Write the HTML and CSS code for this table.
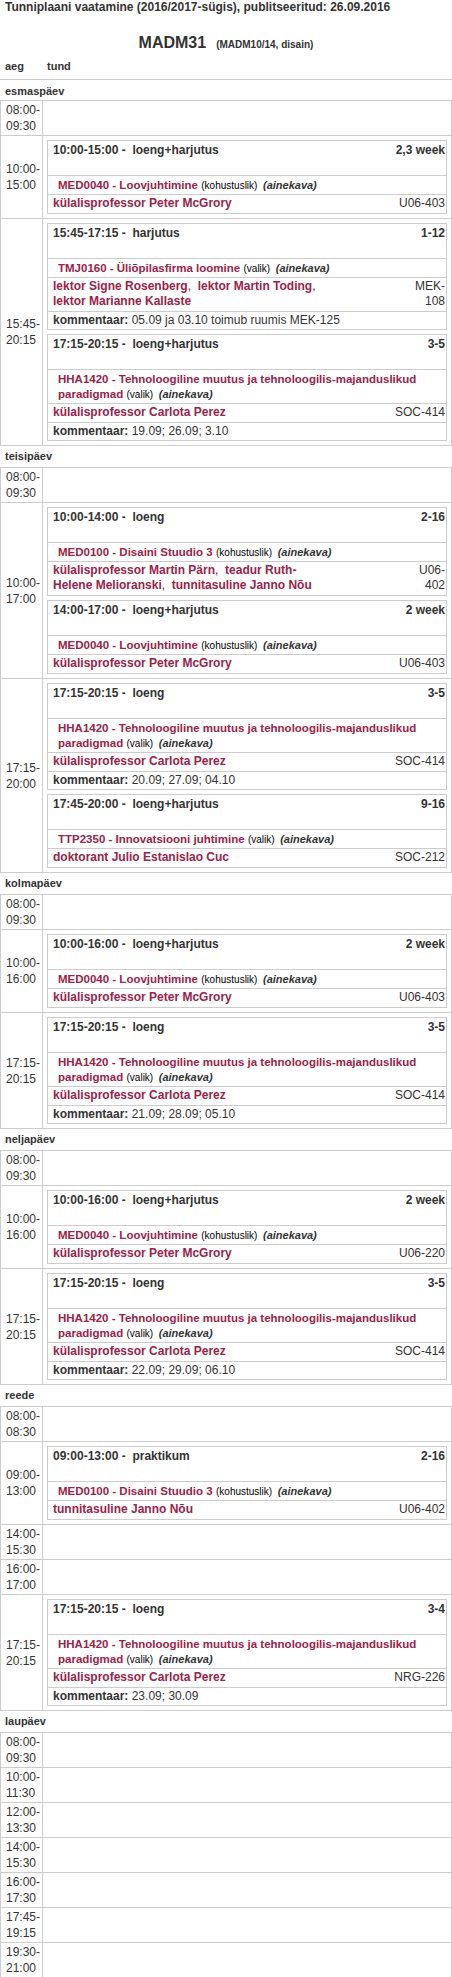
FILE: index.html
```html
<!DOCTYPE html>
<html lang="et">
<head>
<meta charset="utf-8">
<title>Tunniplaani vaatamine</title>
<link rel="stylesheet" href="styles.css">
</head>
<body>
<h1 class="page-title">Tunniplaani vaatamine (2016/2017-sügis), publitseeritud: 26.09.2016</h1>
<h2 class="group-title">MADM31<small>(MADM10/14, disain)</small></h2>
<div class="colhead"><span class="colhead-time">aeg</span><span>tund</span></div>

<h3 class="day-name day-name--first">esmaspäev</h3>
<div class="day">
  <div class="slot"><div class="slot-time">08:00-<wbr>09:30</div><div class="slot-lessons"></div></div>
  <div class="slot"><div class="slot-time">10:00-<wbr>15:00</div>
    <div class="slot-lessons">
      <div class="lesson">
        <div class="lesson-head"><span>10:00-15:00 -&nbsp; loeng+harjutus</span><span>2,3 week</span></div>
        <div class="lesson-course"><span class="course-name">MED0040 - Loovjuhtimine</span> <span class="course-kind">(kohustuslik)&nbsp; </span><em class="course-plan">(ainekava)</em></div>
        <div class="lesson-staff"><div class="staff-names"><span class="person">külalisprofessor Peter McGrory</span></div><div class="staff-room">U06-403</div></div>
      </div>
    </div>
  </div>
  <div class="slot"><div class="slot-time">15:45-<wbr>20:15</div>
    <div class="slot-lessons">
      <div class="lesson">
        <div class="lesson-head"><span>15:45-17:15 -&nbsp; harjutus</span><span>1-12</span></div>
        <div class="lesson-course"><span class="course-name">TMJ0160 - Üliõpilasfirma loomine</span> <span class="course-kind">(valik)&nbsp; </span><em class="course-plan">(ainekava)</em></div>
        <div class="lesson-staff lesson-staff--wrap"><div class="staff-names"><span class="person">lektor Signe Rosenberg</span>,&nbsp; <span class="person">lektor Martin Toding</span>,&nbsp; <span class="person">lektor Marianne Kallaste</span></div><div class="staff-room">MEK-<wbr>108</div></div>
        <div class="lesson-note"><b class="note-label">kommentaar:</b> 05.09 ja 03.10 toimub ruumis MEK-125</div>
      </div>
      <div class="lesson">
        <div class="lesson-head"><span>17:15-20:15 -&nbsp; loeng+harjutus</span><span>3-5</span></div>
        <div class="lesson-course"><span class="course-name">HHA1420 - Tehnoloogiline muutus ja tehnoloogilis-majanduslikud paradigmad</span> <span class="course-kind">(valik)&nbsp; </span><em class="course-plan">(ainekava)</em></div>
        <div class="lesson-staff"><div class="staff-names"><span class="person">külalisprofessor Carlota Perez</span></div><div class="staff-room">SOC-414</div></div>
        <div class="lesson-note"><b class="note-label">kommentaar:</b> 19.09; 26.09; 3.10</div>
      </div>
    </div>
  </div>
</div>

<h3 class="day-name">teisipäev</h3>
<div class="day">
  <div class="slot"><div class="slot-time">08:00-<wbr>09:30</div><div class="slot-lessons"></div></div>
  <div class="slot"><div class="slot-time">10:00-<wbr>17:00</div>
    <div class="slot-lessons">
      <div class="lesson">
        <div class="lesson-head"><span>10:00-14:00 -&nbsp; loeng</span><span>2-16</span></div>
        <div class="lesson-course"><span class="course-name">MED0100 - Disaini Stuudio 3</span> <span class="course-kind">(kohustuslik)&nbsp; </span><em class="course-plan">(ainekava)</em></div>
        <div class="lesson-staff lesson-staff--wrap"><div class="staff-names"><span class="person">külalisprofessor Martin Pärn</span>,&nbsp; <span class="person">teadur Ruth-Helene Melioranski</span>,&nbsp; <span class="person">tunnitasuline Janno Nõu</span></div><div class="staff-room">U06-<wbr>402</div></div>
      </div>
      <div class="lesson">
        <div class="lesson-head"><span>14:00-17:00 -&nbsp; loeng+harjutus</span><span>2 week</span></div>
        <div class="lesson-course"><span class="course-name">MED0040 - Loovjuhtimine</span> <span class="course-kind">(kohustuslik)&nbsp; </span><em class="course-plan">(ainekava)</em></div>
        <div class="lesson-staff"><div class="staff-names"><span class="person">külalisprofessor Peter McGrory</span></div><div class="staff-room">U06-403</div></div>
      </div>
    </div>
  </div>
  <div class="slot"><div class="slot-time">17:15-<wbr>20:00</div>
    <div class="slot-lessons">
      <div class="lesson">
        <div class="lesson-head"><span>17:15-20:15 -&nbsp; loeng</span><span>3-5</span></div>
        <div class="lesson-course"><span class="course-name">HHA1420 - Tehnoloogiline muutus ja tehnoloogilis-majanduslikud paradigmad</span> <span class="course-kind">(valik)&nbsp; </span><em class="course-plan">(ainekava)</em></div>
        <div class="lesson-staff"><div class="staff-names"><span class="person">külalisprofessor Carlota Perez</span></div><div class="staff-room">SOC-414</div></div>
        <div class="lesson-note"><b class="note-label">kommentaar:</b> 20.09; 27.09; 04.10</div>
      </div>
      <div class="lesson">
        <div class="lesson-head"><span>17:45-20:00 -&nbsp; loeng+harjutus</span><span>9-16</span></div>
        <div class="lesson-course"><span class="course-name">TTP2350 - Innovatsiooni juhtimine</span> <span class="course-kind">(valik)&nbsp; </span><em class="course-plan">(ainekava)</em></div>
        <div class="lesson-staff"><div class="staff-names"><span class="person">doktorant Julio Estanislao Cuc</span></div><div class="staff-room">SOC-212</div></div>
      </div>
    </div>
  </div>
</div>

<h3 class="day-name">kolmapäev</h3>
<div class="day">
  <div class="slot"><div class="slot-time">08:00-<wbr>09:30</div><div class="slot-lessons"></div></div>
  <div class="slot"><div class="slot-time">10:00-<wbr>16:00</div>
    <div class="slot-lessons">
      <div class="lesson">
        <div class="lesson-head"><span>10:00-16:00 -&nbsp; loeng+harjutus</span><span>2 week</span></div>
        <div class="lesson-course"><span class="course-name">MED0040 - Loovjuhtimine</span> <span class="course-kind">(kohustuslik)&nbsp; </span><em class="course-plan">(ainekava)</em></div>
        <div class="lesson-staff"><div class="staff-names"><span class="person">külalisprofessor Peter McGrory</span></div><div class="staff-room">U06-403</div></div>
      </div>
    </div>
  </div>
  <div class="slot"><div class="slot-time">17:15-<wbr>20:15</div>
    <div class="slot-lessons">
      <div class="lesson">
        <div class="lesson-head"><span>17:15-20:15 -&nbsp; loeng</span><span>3-5</span></div>
        <div class="lesson-course"><span class="course-name">HHA1420 - Tehnoloogiline muutus ja tehnoloogilis-majanduslikud paradigmad</span> <span class="course-kind">(valik)&nbsp; </span><em class="course-plan">(ainekava)</em></div>
        <div class="lesson-staff"><div class="staff-names"><span class="person">külalisprofessor Carlota Perez</span></div><div class="staff-room">SOC-414</div></div>
        <div class="lesson-note"><b class="note-label">kommentaar:</b> 21.09; 28.09; 05.10</div>
      </div>
    </div>
  </div>
</div>

<h3 class="day-name">neljapäev</h3>
<div class="day">
  <div class="slot"><div class="slot-time">08:00-<wbr>09:30</div><div class="slot-lessons"></div></div>
  <div class="slot"><div class="slot-time">10:00-<wbr>16:00</div>
    <div class="slot-lessons">
      <div class="lesson">
        <div class="lesson-head"><span>10:00-16:00 -&nbsp; loeng+harjutus</span><span>2 week</span></div>
        <div class="lesson-course"><span class="course-name">MED0040 - Loovjuhtimine</span> <span class="course-kind">(kohustuslik)&nbsp; </span><em class="course-plan">(ainekava)</em></div>
        <div class="lesson-staff"><div class="staff-names"><span class="person">külalisprofessor Peter McGrory</span></div><div class="staff-room">U06-220</div></div>
      </div>
    </div>
  </div>
  <div class="slot"><div class="slot-time">17:15-<wbr>20:15</div>
    <div class="slot-lessons">
      <div class="lesson">
        <div class="lesson-head"><span>17:15-20:15 -&nbsp; loeng</span><span>3-5</span></div>
        <div class="lesson-course"><span class="course-name">HHA1420 - Tehnoloogiline muutus ja tehnoloogilis-majanduslikud paradigmad</span> <span class="course-kind">(valik)&nbsp; </span><em class="course-plan">(ainekava)</em></div>
        <div class="lesson-staff"><div class="staff-names"><span class="person">külalisprofessor Carlota Perez</span></div><div class="staff-room">SOC-414</div></div>
        <div class="lesson-note"><b class="note-label">kommentaar:</b> 22.09; 29.09; 06.10</div>
      </div>
    </div>
  </div>
</div>

<h3 class="day-name">reede</h3>
<div class="day">
  <div class="slot"><div class="slot-time">08:00-<wbr>08:30</div><div class="slot-lessons"></div></div>
  <div class="slot"><div class="slot-time">09:00-<wbr>13:00</div>
    <div class="slot-lessons">
      <div class="lesson">
        <div class="lesson-head"><span>09:00-13:00 -&nbsp; praktikum</span><span>2-16</span></div>
        <div class="lesson-course"><span class="course-name">MED0100 - Disaini Stuudio 3</span> <span class="course-kind">(kohustuslik)&nbsp; </span><em class="course-plan">(ainekava)</em></div>
        <div class="lesson-staff"><div class="staff-names"><span class="person">tunnitasuline Janno Nõu</span></div><div class="staff-room">U06-402</div></div>
      </div>
    </div>
  </div>
  <div class="slot"><div class="slot-time">14:00-<wbr>15:30</div><div class="slot-lessons"></div></div>
  <div class="slot"><div class="slot-time">16:00-<wbr>17:00</div><div class="slot-lessons"></div></div>
  <div class="slot"><div class="slot-time">17:15-<wbr>20:15</div>
    <div class="slot-lessons">
      <div class="lesson">
        <div class="lesson-head"><span>17:15-20:15 -&nbsp; loeng</span><span>3-4</span></div>
        <div class="lesson-course"><span class="course-name">HHA1420 - Tehnoloogiline muutus ja tehnoloogilis-majanduslikud paradigmad</span> <span class="course-kind">(valik)&nbsp; </span><em class="course-plan">(ainekava)</em></div>
        <div class="lesson-staff"><div class="staff-names"><span class="person">külalisprofessor Carlota Perez</span></div><div class="staff-room">NRG-226</div></div>
        <div class="lesson-note"><b class="note-label">kommentaar:</b> 23.09; 30.09</div>
      </div>
    </div>
  </div>
</div>

<h3 class="day-name">laupäev</h3>
<div class="day">
  <div class="slot"><div class="slot-time">08:00-<wbr>09:30</div><div class="slot-lessons"></div></div>
  <div class="slot"><div class="slot-time">10:00-<wbr>11:30</div><div class="slot-lessons"></div></div>
  <div class="slot"><div class="slot-time">12:00-<wbr>13:30</div><div class="slot-lessons"></div></div>
  <div class="slot"><div class="slot-time">14:00-<wbr>15:30</div><div class="slot-lessons"></div></div>
  <div class="slot"><div class="slot-time">16:00-<wbr>17:30</div><div class="slot-lessons"></div></div>
  <div class="slot"><div class="slot-time">17:45-<wbr>19:15</div><div class="slot-lessons"></div></div>
  <div class="slot"><div class="slot-time">19:30-<wbr>21:00</div><div class="slot-lessons"></div></div>
</div>
</body>
</html>
```

FILE: styles.css
```css
* {
  box-sizing: border-box;
}

body {
  margin: 0;
  font-family: "Liberation Sans", Arial, Helvetica, sans-serif;
  color: #333;
  background: #fff;
}

.page-title {
  margin: 0;
  padding: 0 5px;
  font-size: 12px;
  line-height: 15px;
  font-weight: bold;
}

.group-title {
  margin: 19px 0 0;
  text-align: center;
  font-size: 16px;
  line-height: 18px;
  font-weight: bold;
}

.group-title small {
  margin-left: 10px;
  font-size: 10px;
}

.colhead {
  display: flex;
  padding: 6px 5px 6px;
  font-size: 11px;
  line-height: 13px;
  font-weight: bold;
  border-bottom: 1px solid #ccc;
}

.colhead-time {
  width: 42px;
}

.day-name {
  margin: 0;
  padding: 4px 5px;
  font-size: 11px;
  line-height: 13px;
  font-weight: bold;
}

.day-name--first {
  padding: 5px 5px 2px;
}

.day {
  border: 1px solid #ccc;
  border-bottom: 0;
}

.slot {
  display: grid;
  grid-template-columns: 42px 1fr;
  border-bottom: 1px solid #ccc;
}

.slot-time {
  display: flex;
  align-items: center;
  min-height: 34px;
  padding: 1px 0 1px 5px;
  border-right: 1px solid #ccc;
  font-size: 12px;
  line-height: 16px;
}

.slot-lessons {
  display: flex;
  flex-direction: column;
  gap: 4px;
  padding: 4px;
}

.slot-lessons:empty {
  padding: 0;
}

.lesson {
  border: 1px solid #ccc;
  font-size: 12px;
  line-height: 15px;
}

.lesson-head {
  display: flex;
  justify-content: space-between;
  height: 34px;
  padding: 2px 1px 0 5px;
  font-weight: bold;
}

.lesson-course {
  padding: 2px 1px 1px 10px;
  border-top: 1px solid #ccc;
}

.course-name {
  color: #9d2249;
  font-weight: bold;
  font-size: 11.5px;
}

.course-kind {
  color: #000;
  font-size: 10px;
}

.course-plan {
  font-weight: bold;
  font-style: italic;
  font-size: 11px;
}

.lesson-staff {
  display: flex;
  justify-content: space-between;
  gap: 8px;
  padding: 1px 1px 2px 5px;
  border-top: 1px solid #ccc;
}

.person {
  color: #9d2249;
  font-weight: bold;
}

.staff-room {
  flex: none;
  text-align: right;
}

.lesson-staff--wrap .staff-names {
  max-width: 272px;
}

.lesson-staff--wrap .staff-room {
  width: min-content;
}

.lesson-note {
  padding: 1px 1px 1px 5px;
  border-top: 1px solid #ccc;
}

.note-label {
  font-weight: bold;
}
```
